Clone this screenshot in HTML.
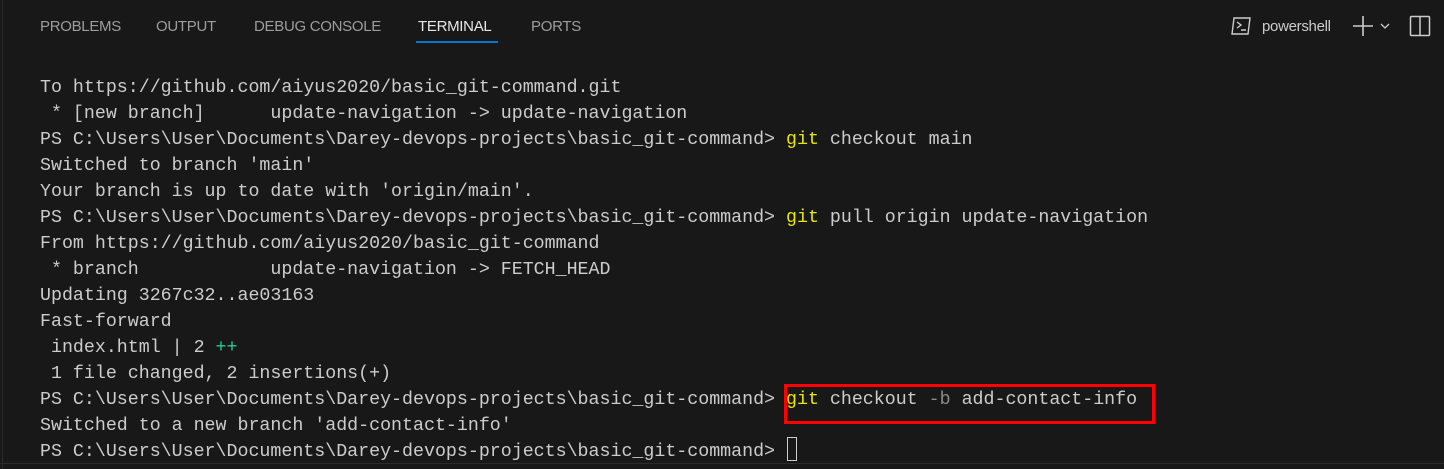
<!DOCTYPE html>
<html><head><style>
body{margin:0;width:1444px;height:469px;background:#181818;overflow:hidden;position:relative;font-family:"Liberation Sans",sans-serif}
.tab{position:absolute;top:18px;font-size:15px;color:#9d9d9d;letter-spacing:-0.3px}
.term{position:absolute;left:40px;top:75px;font-family:"Liberation Mono",monospace;font-size:18.3px;line-height:26px;color:#cccccc;white-space:pre}
.y{color:#e5e510}.g{color:#8a8a8a}.gr{color:#23d18b}
</style></head><body>
<div style="position:absolute;left:2px;top:0;width:1px;height:469px;background:#2b2b2b"></div>
<div class="tab" style="left:40px">PROBLEMS</div>
<div class="tab" style="left:156px">OUTPUT</div>
<div class="tab" style="left:254px">DEBUG CONSOLE</div>
<div class="tab" style="left:418px;color:#e7e7e7">TERMINAL</div>
<div class="tab" style="left:531px">PORTS</div>
<div style="position:absolute;left:416px;top:41px;width:82px;height:2px;background:#0078d4"></div>
<svg style="position:absolute;left:1231px;top:15px" width="22" height="22" viewBox="0 0 22 22"><path d="M3 3h16l-2 16H1z" fill="none" stroke="#ccc" stroke-width="1.4"/><path d="M6 7l4 3-4 3M10 15h5" fill="none" stroke="#ccc" stroke-width="1.4"/></svg>
<div class="tab" style="left:1262px;color:#cccccc">powershell</div>
<svg style="position:absolute;left:1352px;top:15px" width="44" height="22"><path d="M11 1v20M1 11h20" stroke="#ccc" stroke-width="1.6"/><path d="M29 9l4 4 4-4" fill="none" stroke="#ccc" stroke-width="1.3"/></svg>
<svg style="position:absolute;left:1409px;top:15px" width="22" height="22"><rect x="1.5" y="1.5" width="19" height="19" rx="1" fill="none" stroke="#ccc" stroke-width="1.5"/><path d="M11 1v20" stroke="#ccc" stroke-width="1.5"/></svg>
<div class="term">To https://github.com/aiyus2020/basic_git-command.git
 * [new branch]      update-navigation -&gt; update-navigation
PS C:\Users\User\Documents\Darey-devops-projects\basic_git-command&gt; <span class="y">git</span> checkout main
Switched to branch 'main'
Your branch is up to date with 'origin/main'.
PS C:\Users\User\Documents\Darey-devops-projects\basic_git-command&gt; <span class="y">git</span> pull origin update-navigation
From https://github.com/aiyus2020/basic_git-command
 * branch            update-navigation -&gt; FETCH_HEAD
Updating 3267c32..ae03163
Fast-forward
 index.html | 2 <span class="gr">++</span>
 1 file changed, 2 insertions(+)
PS C:\Users\User\Documents\Darey-devops-projects\basic_git-command&gt; <span class="y">git</span> checkout <span class="g">-b</span> add-contact-info
Switched to a new branch 'add-contact-info'
PS C:\Users\User\Documents\Darey-devops-projects\basic_git-command&gt; </div>
<div style="position:absolute;left:787px;top:437px;width:10px;height:24px;border:1.5px solid #ccc;box-sizing:border-box"></div>
<div style="position:absolute;left:784px;top:384px;width:371px;height:40px;border:3px solid #ff0000;box-sizing:border-box"></div>
<div style="position:absolute;left:0;top:463px;width:1444px;height:1px;background:#2b2b2b"></div>
</body></html>
